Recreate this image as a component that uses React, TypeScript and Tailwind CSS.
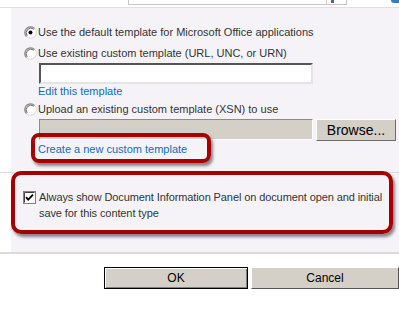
import React from "react";

function Radio({ checked }: { checked?: boolean }) {
  return (
    <svg width="13" height="13" viewBox="0 0 13 13" className="shrink-0">
      <circle cx="6.5" cy="6.5" r="5.8" fill="#ffffff" stroke="#d8d8d8" strokeWidth="1" />
      <path d="M2.4 10.6 A5.8 5.8 0 0 1 10.6 2.4" fill="none" stroke="#8a8a8a" strokeWidth="1.2" />
      <path d="M3.2 9.8 A4.7 4.7 0 0 1 9.8 3.2" fill="none" stroke="#404040" strokeWidth="0.8" />
      {checked && <circle cx="6.5" cy="6.5" r="2" fill="#000000" />}
    </svg>
  );
}

function Check() {
  return (
    <svg width="13" height="13" viewBox="0 0 13 13" className="shrink-0">
      <rect x="0.5" y="0.5" width="12" height="12" fill="#ffffff" stroke="#808080" />
      <path d="M1.5 11.5 V1.5 H11.5" fill="none" stroke="#404040" />
      <path d="M3 6.2 L5.2 8.6 L10 3.6" fill="none" stroke="#000000" strokeWidth="1.8" />
    </svg>
  );
}

export default function App() {
  return (
    <div
      className="relative w-[399px] h-[324px] overflow-hidden bg-white text-[11px] text-[#333333]"
      style={{ fontFamily: '"Liberation Sans", Arial, sans-serif' }}
    >
      {/* top strip */}
      <div className="flex h-[8px] border-b border-[#e0dde3]">
        <div className="ml-[128px] flex h-[5px]">
          <div className="w-[199px] border border-t-0 border-[#c6c6c6] bg-white" />
          <div className="relative w-[20px] border border-t-0 border-l-0 border-[#c6c6c6] bg-white">
            <div className="absolute left-[4px] top-0 h-[3px] w-[3px] bg-[#2f6fb8]" />
          </div>
        </div>
        <div className="ml-auto h-[3px] w-[8px] rounded-bl-[3px] bg-[#3a78c8]" />
      </div>

      {/* section 1 */}
      <div className="flex h-[164px]">
        <div className="w-[11px] bg-white" />
        <div className="flex-1 bg-[#f6f3f8] pl-[13px] pt-[16px]">
          <div className="flex h-[16px] items-center gap-[1px]">
            <Radio checked />
            <span>Use the default template for Microsoft Office applications</span>
          </div>
          <div className="mt-[5px] flex h-[16px] items-center gap-[1px]">
            <Radio />
            <span>Use existing custom template (URL, UNC, or URN)</span>
          </div>
          <div className="ml-[15px] mt-[2px] h-[21px] w-[274px] border-2 border-t-[#555555] border-l-[#555555] border-b-[#e4e4e4] border-r-[#e4e4e4] bg-white" />
          <div className="ml-[14px] flex h-[14px] items-center text-[#0b6cc0]">Edit this template</div>
          <div className="mt-[3px] flex h-[16px] items-center gap-[1px]">
            <Radio />
            <span>Upload an existing custom template (XSN) to use</span>
          </div>
          <div className="mt-[2px] flex items-start">
            <div className="ml-[15px] h-[21px] w-[274px] border border-t-[#8c8c8c] border-l-[#8c8c8c] border-b-white border-r-white bg-[#d4d0c8]" />
            <div className="ml-[3px] flex h-[22px] w-[80px] items-center justify-center border border-t-white border-l-white border-b-[#6e6e6e] border-r-[#6e6e6e] bg-[#d4d0c8] text-[14px] text-black">
              Browse...
            </div>
          </div>
          <div className="ml-[14px] mt-[1px] flex h-[14px] items-center text-[#0b6cc0]">Create a new custom template</div>
        </div>
      </div>

      <div className="h-px bg-[#dedbe0]" />

      {/* section 2 */}
      <div className="flex h-[79px]">
        <div className="w-[11px] bg-white" />
        <div className="flex-1 bg-[#f6f3f8] pl-[12px] pt-[16px]">
          <div className="flex items-start gap-[3px]">
            <div className="mt-[2px]">
              <Check />
            </div>
            <div className="whitespace-nowrap leading-[16px] tracking-[-0.1px]">
              Always show Document Information Panel on document open and initial
              <br />
              save for this content type
            </div>
          </div>
        </div>
      </div>

      <div className="h-[2px] bg-[#dcdadd]" />

      {/* footer */}
      <div className="mt-[13px] flex">
        <div className="ml-[104px] flex h-[22px] w-[152px] items-center justify-center border border-black bg-[#d4d0c8] text-[12px] text-black shadow-[inset_1px_1px_0_#ffffff,inset_-1px_-1px_0_#808080]">
          OK
        </div>
        <div className="ml-[3px] flex h-[22px] w-[148px] shrink-0 items-center justify-center border border-t-white border-l-white border-b-[#555555] border-r-[#555555] bg-[#d4d0c8] text-[12px] text-black">
          Cancel
        </div>
      </div>

      {/* annotations */}
      <div className="absolute left-[31px] top-[133px] h-[30px] w-[180px] rounded-[8px] border-4 border-[#a60000] shadow-[2px_3px_3px_rgba(0,0,0,0.45)]" />
      <div className="absolute left-[11px] top-[171px] h-[63px] w-[382px] rounded-[10px] border-4 border-[#a60000] shadow-[2px_3px_3px_rgba(0,0,0,0.45)]" />
    </div>
  );
}
